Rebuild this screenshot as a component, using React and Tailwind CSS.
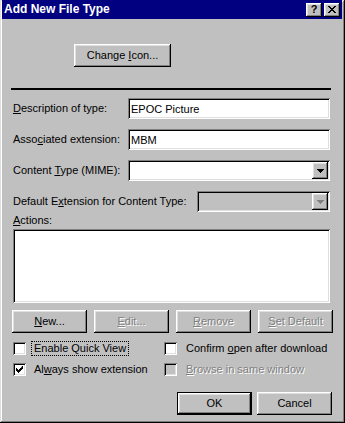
import React from 'react';

const raised = 'shadow-[inset_-1px_-1px_#000,inset_1px_1px_#fff,inset_-2px_-2px_#808080,inset_2px_2px_#dfdfdf]';
const sunken = 'shadow-[inset_1px_1px_#808080,inset_-1px_-1px_#fff,inset_2px_2px_#000,inset_-2px_-2px_#dfdfdf]';
const dimText = 'text-[#808080] [text-shadow:1px_1px_0_#fff]';

const U = ({ children }) => <span className="underline underline-offset-[1px]">{children}</span>;

const Btn = ({ children, disabled, className = '' }) => (
  <div className={`h-[23px] bg-[#c0c0c0] flex items-center justify-center ${raised} ${disabled ? dimText : ''} ${className}`}>
    <span>{children}</span>
  </div>
);

const Arrow = ({ color }) => (
  <svg width="7" height="4" viewBox="0 0 7 4">
    <path d="M0 0h7v1h-1v1h-1v1h-1v1h-1v-1h-1v-1h-1v-1h-1z" fill={color} />
  </svg>
);

const Combo = ({ disabled, className = '' }) => (
  <div className={`h-[21px] ${disabled ? 'bg-[#c0c0c0]' : 'bg-white'} ${sunken} p-[2px] flex justify-end ${className}`}>
    <div className={`w-[16px] h-full bg-[#c0c0c0] flex items-center justify-center ${raised}`}>
      <Arrow color={disabled ? '#808080' : '#000'} />
    </div>
  </div>
);

const Field = ({ value }) => (
  <div className={`w-[202px] h-[21px] bg-white ${sunken} flex items-center pl-[3px] pt-[1px]`}>{value}</div>
);

const Check = ({ checked, disabled }) => (
  <div className={`w-[13px] h-[13px] ${disabled ? 'bg-[#c0c0c0]' : 'bg-white'} ${sunken} flex items-center justify-center shrink-0`}>
    {checked && (
      <svg width="7" height="7" viewBox="0 0 7 7">
        <path d="M6 0h1v3h-1v1h-1v1h-1v1h-1v1h-1v-1h-1v-1h-1v-3h1v1h1v1h1v-1h1v-1h1z" fill="#000" />
      </svg>
    )}
  </div>
);

export default function App() {
  return (
    <div className="w-[345px] h-[423px] bg-[#c0c0c0] font-['Liberation_Sans',Arial,sans-serif] text-[11px] leading-[13px] text-black shadow-[inset_-1px_-1px_#000,inset_1px_1px_#dfdfdf,inset_-2px_-2px_#808080,inset_2px_2px_#fff] flex flex-col">
      {/* title bar */}
      <div className="h-[19px] ml-[2px] mr-[3px] bg-[#000080] flex items-center pl-[2px] pr-[2px]">
        <span className="flex-1 text-white font-bold text-[12px]">Add New File Type</span>
        <div className={`w-[16px] h-[14px] bg-[#c0c0c0] ${raised} flex items-center justify-center font-bold text-[11px] leading-none pb-[1px]`}>?</div>
        <div className={`w-[16px] h-[14px] ml-[2px] bg-[#c0c0c0] ${raised} flex items-center justify-center`}>
          <svg width="8" height="7" viewBox="0 0 8 7">
            <path d="M0 0h2v1h1v1h2v-1h1v-1h2v1h-1v1h-1v1h-1v1h1v1h1v1h1v1h-2v-1h-1v-1h-2v1h-1v1h-2v-1h1v-1h1v-1h1v-1h-1v-1h-1v-1h-1z" fill="#000" />
          </svg>
        </div>
      </div>

      <Btn className="ml-[74px] mt-[25px] w-[97px]">Change <U>I</U>con...</Btn>

      <div className="mt-[21px] ml-[11px] w-[320px] h-[2px] bg-black" />

      <div className="mt-[8px] flex items-center">
        <span className="w-[128px] pl-[13px]"><U>D</U>escription of type:</span>
        <Field value="EPOC Picture" />
      </div>
      <div className="mt-[10px] flex items-center">
        <span className="w-[128px] pl-[13px]">Asso<U>c</U>iated extension:</span>
        <Field value="MBM" />
      </div>
      <div className="mt-[10px] flex items-center">
        <span className="w-[128px] pl-[13px]">Content <U>T</U>ype (MIME):</span>
        <Combo className="w-[202px]" />
      </div>
      <div className="mt-[10px] flex items-center">
        <span className="w-[197px] pl-[13px]">Default E<U>x</U>tension for Content Type:</span>
        <Combo disabled className="w-[133px]" />
      </div>

      <span className="mt-[2px] pl-[13px]"><U>A</U>ctions:</span>
      <div className={`mt-[2px] ml-[13px] w-[317px] h-[74px] bg-white ${sunken}`} />

      <div className="mt-[7px] ml-[12px] flex gap-[7px]">
        <Btn className="w-[75px]"><U>N</U>ew...</Btn>
        <Btn disabled className="w-[75px]"><U>E</U>dit...</Btn>
        <Btn disabled className="w-[75px]"><U>R</U>emove</Btn>
        <Btn disabled className="w-[75px]"><U>S</U>et Default</Btn>
      </div>

      <div className="mt-[7px] flex items-center h-[16px]">
        <div className="w-[164px] pl-[13px] flex items-center">
          <Check />
          <span className="ml-[5px] border border-dotted border-black px-[2px] leading-[13px]">Enable Quick View</span>
        </div>
        <Check />
        <span className="ml-[9px]">Confirm <U>o</U>pen after download</span>
      </div>
      <div className="mt-[5px] flex items-center h-[16px]">
        <div className="w-[164px] pl-[13px] flex items-center">
          <Check checked />
          <span className="ml-[8px]">Al<U>w</U>ays show extension</span>
        </div>
        <Check disabled />
        <span className={`ml-[9px] ${dimText}`}><U>B</U>rowse in same window</span>
      </div>

      <div className="mt-[15px] ml-[177px] flex gap-[5px]">
        <div className="w-[75px] h-[23px] border border-black">
          <Btn className="w-full h-full">OK</Btn>
        </div>
        <Btn className="w-[75px]">Cancel</Btn>
      </div>
    </div>
  );
}
